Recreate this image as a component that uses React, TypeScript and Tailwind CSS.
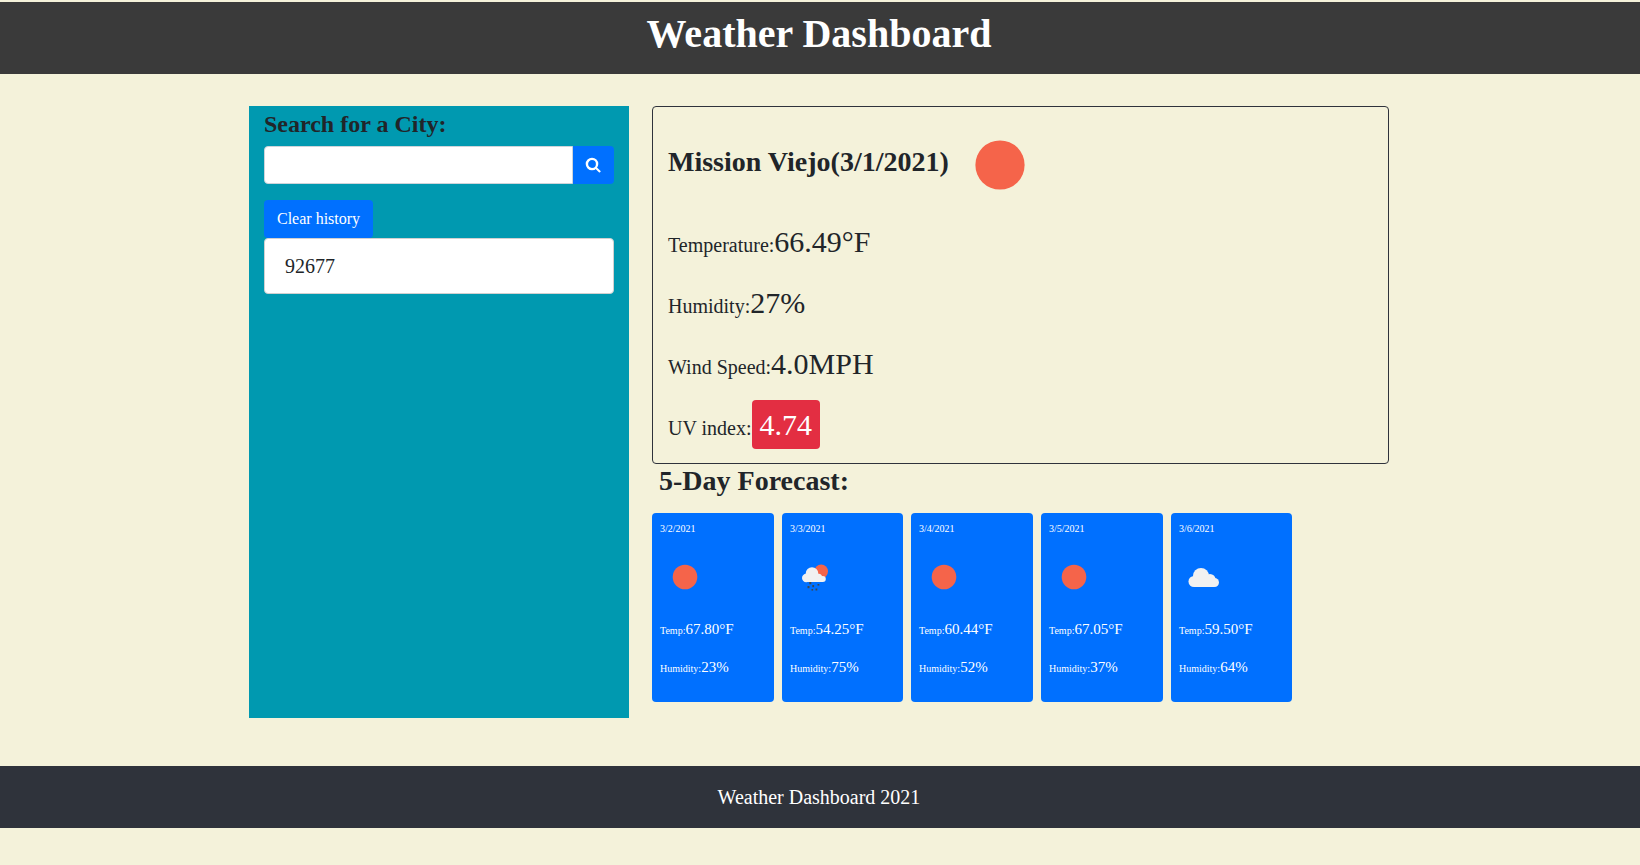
const SERIF = "font-['Liberation_Serif',serif]";

function Sun({ size }: { size: number }) {
  return (
    <svg width={size} height={size} viewBox="0 0 100 100" className="shrink-0">
      <circle cx="50" cy="50" r="24.6" fill="#f5644a" />
    </svg>
  );
}

function Cloud() {
  return (
    <svg width="50" height="50" viewBox="0 0 50 50" className="shrink-0">
      <g fill="#f1f1f1">
        <circle cx="15" cy="29.5" r="5.5" />
        <circle cx="22" cy="24" r="8" />
        <circle cx="31" cy="27.5" r="5.5" />
        <circle cx="35.5" cy="30.5" r="4.5" />
        <rect x="15" y="27" width="20" height="8" />
      </g>
    </svg>
  );
}

function RainSun() {
  return (
    <svg width="50" height="50" viewBox="0 0 50 50" className="shrink-0">
      <circle cx="31.2" cy="19.4" r="6.8" fill="#f5644a" />
      <g fill="#f1f1f1">
        <circle cx="16.2" cy="26" r="4.2" />
        <circle cx="22" cy="21.5" r="6.3" />
        <circle cx="28.5" cy="25.4" r="3.6" />
        <circle cx="32.8" cy="27" r="3" />
        <rect x="16" y="25" width="17" height="5" />
      </g>
      <g fill="#3b4650">
        <rect x="19.3" y="30" width="2" height="2.2" />
        <rect x="17.5" y="34" width="2" height="2.2" />
        <rect x="22.3" y="33" width="1.8" height="2.2" />
        <rect x="27.5" y="32" width="1.8" height="1.6" />
        <rect x="21.5" y="37" width="1.6" height="1.6" />
        <rect x="25.5" y="36.5" width="1.8" height="2" />
      </g>
    </svg>
  );
}

function SearchIcon() {
  return (
    <svg width="16" height="16" viewBox="0 0 16 16" fill="none" stroke="white">
      <circle cx="7" cy="7" r="5.1" strokeWidth="2.4" />
      <line x1="11" y1="11" x2="14.6" y2="14.4" strokeWidth="2" strokeLinecap="round" />
    </svg>
  );
}

const days = [
  { date: "3/2/2021", temp: "67.80°F", hum: "23%", icon: <Sun size={50} />, w: "w-[122px]" },
  { date: "3/3/2021", temp: "54.25°F", hum: "75%", icon: <RainSun />, w: "w-[121px]" },
  { date: "3/4/2021", temp: "60.44°F", hum: "52%", icon: <Sun size={50} />, w: "w-[122px]" },
  { date: "3/5/2021", temp: "67.05°F", hum: "37%", icon: <Sun size={50} />, w: "w-[122px]" },
  { date: "3/6/2021", temp: "59.50°F", hum: "64%", icon: <Cloud />, w: "w-[121px]" },
];

function Stat({ label, value }: { label: string; value: string }) {
  return (
    <p className="mb-4 h-[45px] text-[20px] leading-[45px]">
      {label}
      <span className="text-[30px]">{value}</span>
    </p>
  );
}

export default function App() {
  return (
    <div className={`${SERIF} h-[865px] overflow-hidden bg-[#f4f2da] pt-[2px] text-[#212529]`}>
      <header className="h-[72px] bg-[#3a3a3a] pr-[2px] pt-2 text-center">
        <h1 className="text-[40px] font-bold leading-[48px] text-white">Weather Dashboard</h1>
      </header>

      <main className="ml-[249px] mt-8 flex w-[1140px] items-start gap-[23px]">
        <aside className="h-[612px] w-[380px] shrink-0 bg-[#0099b0] pl-[15px] pr-[15.5px] pt-[4px]">
          <h4 className="mb-[7px] text-[24px] font-bold leading-[1.2]">Search for a City:</h4>
          <div className="flex h-[38px]">
            <input
              aria-label="City"
              className="h-full min-w-0 flex-1 rounded-l border border-[#ced4da] bg-white px-3"
            />
            <button className="flex h-full w-[41px] items-center justify-center rounded-r bg-[#0070ff] text-white">
              <SearchIcon />
            </button>
          </div>
          <button className="mt-4 block h-[38px] rounded bg-[#0070ff] px-[13px] text-[16px] text-white">
            Clear history
          </button>
          <ul>
            <li className="rounded border border-[#d0d0d0] bg-white px-5 py-3 text-[20px] leading-[30px]">
              92677
            </li>
          </ul>
        </aside>

        <section className="min-w-0 flex-1">
          <div className="rounded border border-[#2f333b] px-[15px] pb-[16px] pt-[9px]">
            <div className="flex h-[103px] items-start">
              <h3 className="pt-[29px] text-[28px] font-bold leading-[1.2]">Mission Viejo(3/1/2021)</h3>
              <div className="-mt-[1px] ml-[1px]">
                <Sun size={100} />
              </div>
            </div>
            <Stat label="Temperature:" value="66.49°F" />
            <Stat label="Humidity:" value="27%" />
            <Stat label="Wind Speed:" value="4.0MPH" />
            <p className="h-[45px] text-[20px] leading-[45px]">
              UV index:
              <span className="rounded bg-[#e32e42] px-2 py-[8px] text-[30px] text-white">4.74</span>
            </p>
          </div>

          <h3 className="mb-[15px] pl-[7px] text-[28px] font-bold leading-[1.2]">5-Day Forecast:</h3>

          <div className="flex gap-2">
            {days.map((d) => (
              <div key={d.date} className={`${d.w} h-[189px] shrink-0 rounded bg-[#0070ff] p-2 text-white`}>
                <p className="mb-4 text-[10px] leading-[15px]">{d.date}</p>
                <div className="mb-4 h-[50px]">{d.icon}</div>
                <p className="mb-[14px] text-[10px] leading-[22.5px]">
                  Temp:<span className="text-[15px]">{d.temp}</span>
                </p>
                <p className="text-[10px] leading-[22.5px]">
                  Humidity:<span className="text-[15px]">{d.hum}</span>
                </p>
              </div>
            ))}
          </div>
        </section>
      </main>

      <footer className="mt-12 h-[62px] bg-[#2f333b] pr-[2px] text-center text-[20px] leading-[62px] text-white">
        Weather Dashboard 2021
      </footer>
    </div>
  );
}
